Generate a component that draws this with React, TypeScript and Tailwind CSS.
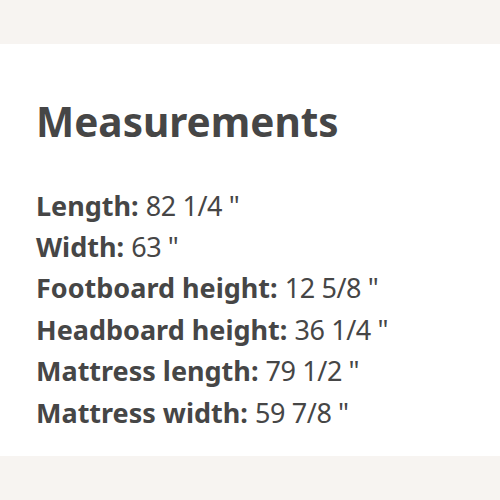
export default function App() {
  const rows: [string, string][] = [
    ["Length:", "82 1/4 \""],
    ["Width:", "63 \""],
    ["Footboard height:", "12 5/8 \""],
    ["Headboard height:", "36 1/4 \""],
    ["Mattress length:", "79 1/2 \""],
    ["Mattress width:", "59 7/8 \""],
  ];
  return (
    <div className="w-[500px] h-[500px] bg-[#f7f4f1] flex flex-col" style={{ fontFamily: '"Noto Sans", sans-serif' }}>
      <div className="h-[44px] shrink-0" />
      <div className="h-[412px] bg-white px-[36px] text-[#464646]">
        <h2 className="mt-[49.5px] text-[40.5px] leading-[56px] font-bold">Measurements</h2>
        <div className="mt-[35px] flex flex-col">
          {rows.map(([k, v]) => (
            <div key={k} className="text-[27px] leading-[41.4px]">
              <span className="font-bold">{k}</span>{" "}
              <span className="tracking-[-0.4px]">{v}</span>
            </div>
          ))}
        </div>
      </div>
    </div>
  );
}
